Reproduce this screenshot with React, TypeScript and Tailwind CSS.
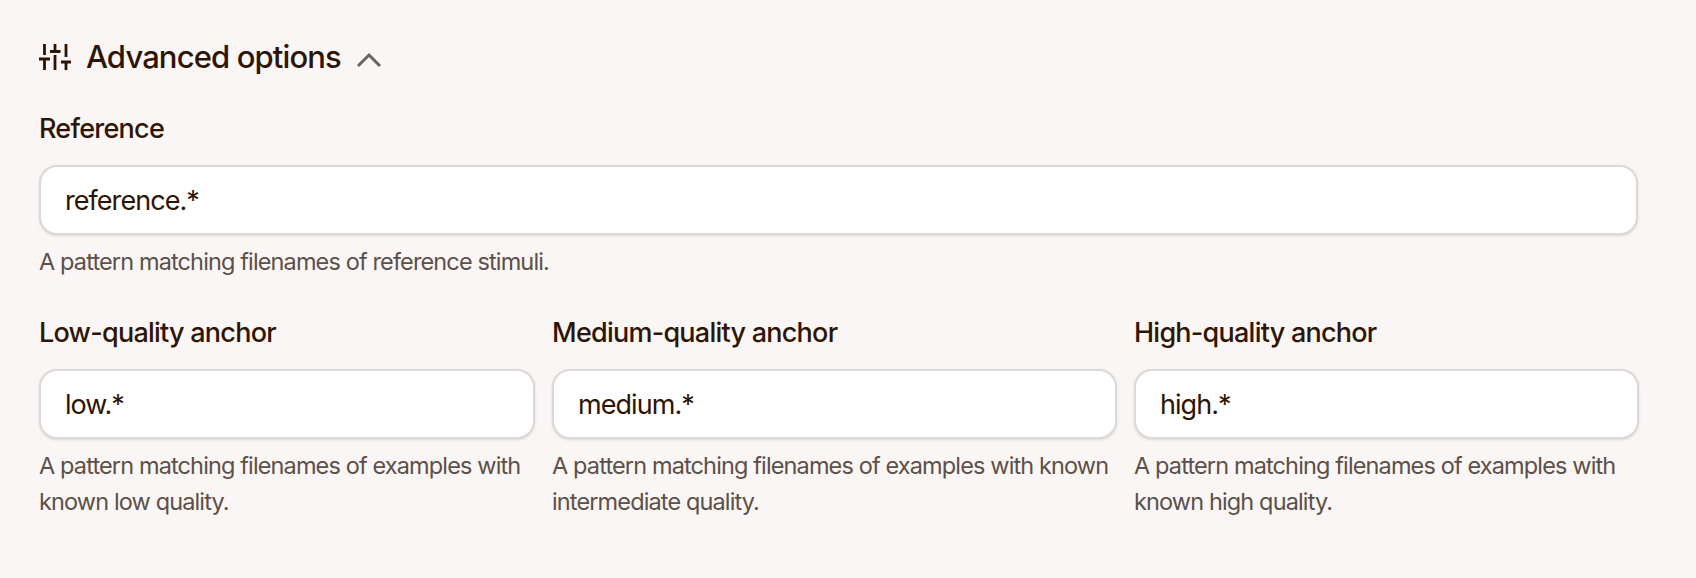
const fields = [
  { label: "Low-quality anchor", value: "low.*", help: "A pattern matching filenames of examples with known low quality." },
  { label: "Medium-quality anchor", value: "medium.*", help: "A pattern matching filenames of examples with known intermediate quality." },
  { label: "High-quality anchor", value: "high.*", help: "A pattern matching filenames of examples with known high quality." },
];

function SlidersIcon() {
  return (
    <svg width="32" height="26" viewBox="0 0 32 26" fill="none" stroke="#2e1503" strokeWidth="2.8" className="shrink-0">
      <path d="M5.5 0v11M5.5 15v11M16 0v6M16 11v15M27 0v13M27 18v8M0 15h11M11 7.5h10.5M22 18h10" />
    </svg>
  );
}

function Field({ label, value, help }: { label: string; value: string; help: string }) {
  return (
    <div className="flex flex-col">
      <label className="text-[27px] leading-[36px] font-[550] tracking-[-0.028em] text-[#2e1503]">{label}</label>
      <input
        readOnly
        value={value}
        className="mt-[18px] h-[70px] w-full rounded-[18px] border-2 border-[#dcd9d6] bg-white px-[24px] text-[27px] tracking-[-0.035em] text-[#2e1503] shadow-sm outline-none"
      />
      <p className="mt-[9px] text-[23.5px] leading-[36px] tracking-[-0.037em] text-[#5c5049]">{help}</p>
    </div>
  );
}

export default function App() {
  return (
    <div className="h-[578px] w-[1696px] bg-[#faf6f5] pr-[58px] pl-[39px] pt-[33px] font-['Inter',sans-serif]">
      <div className="flex h-[48px] items-center">
        <SlidersIcon />
        <span className="ml-[15px] text-[31px] font-[550] tracking-[-0.028em] text-[#2e1503]">Advanced options</span>
        <svg width="26" height="16" viewBox="0 0 26 16" fill="none" stroke="#6b6560" strokeWidth="3" className="mt-[5px] ml-[15px]">
          <path d="M2 14 13 3l11 11" />
        </svg>
      </div>
      <div className="mt-[30px]">
        <Field label="Reference" value="reference.*" help="A pattern matching filenames of reference stimuli." />
      </div>
      <div className="mt-[35px] grid grid-cols-[496px_565px_505px] gap-x-[17px]">
        {fields.map((f) => (
          <Field key={f.label} {...f} />
        ))}
      </div>
    </div>
  );
}
